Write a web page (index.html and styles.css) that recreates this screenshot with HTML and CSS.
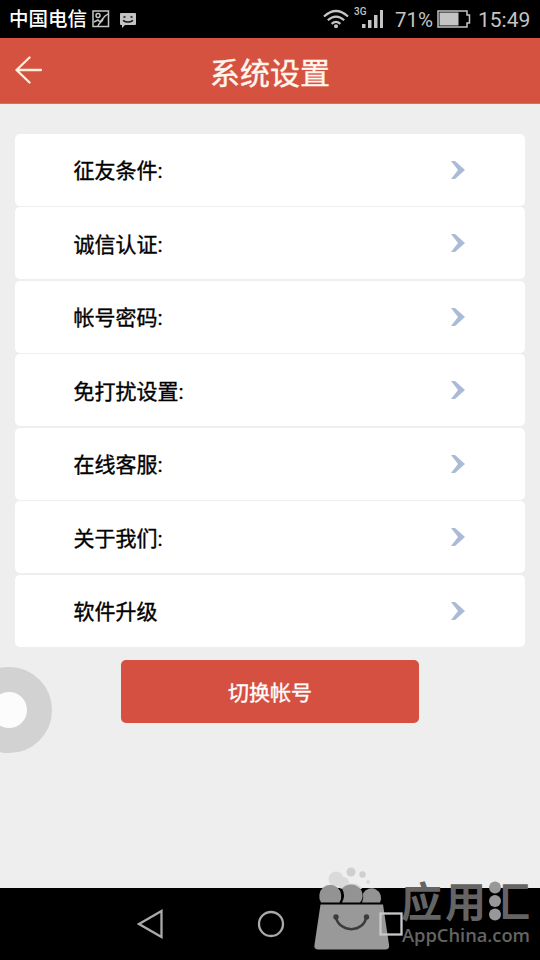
FILE: index.html
```html
<!DOCTYPE html>
<html lang="zh-CN">
<head>
<meta charset="utf-8">
<title>系统设置</title>
<link rel="stylesheet" href="styles.css">
</head>
<body>
<div class="screen">
  <div class="status">
    <span class="carrier">中国电信</span>
    <svg class="pic" width="18" height="18" viewBox="0 0 18 18" fill="none" stroke="#c4c4c4" stroke-width="1.5"><rect x="1" y="1" width="15.5" height="15.5"/><circle cx="6" cy="5.5" r="2"/><path d="M2 12l4-2 2 2 5-6 3-2M6 16c1-4 4-3 5-7"/></svg>
    <svg class="msg" width="18" height="17" viewBox="0 0 18 17"><path d="M2 1h14a1 1 0 0 1 1 1v10a1 1 0 0 1-1 1H6l-3 3v-3H2a1 1 0 0 1-1-1V2a1 1 0 0 1 1-1z" fill="#c4c4c4"/><path d="M4.500 5h2M11.500 5h2M4 8.300q5 3.500 10 0" stroke="#111" stroke-width="1.500" fill="none"/></svg>
    <span class="spacer"></span>
    <svg class="wifi" width="26" height="20" viewBox="0 0 26 20" fill="none" stroke="#c4c4c4" stroke-width="2.200"><path d="M1 7.500Q13-3.500 25 7.500M4.800 11.300Q13 3.900 21.200 11.300M8.600 14.800Q13 11.100 17.400 14.800"/><circle cx="13" cy="17.300" r="2" fill="#c4c4c4" stroke="none"/></svg>
    <span class="net">3G</span>
    <svg class="bars" width="23" height="20" viewBox="0 0 23 20" fill="#c4c4c4"><path d="M1 15h3.500v4H1zM7 11h3.500v8H7zM13 6h3.500v13H13zM19 1h3v18h-3z"/></svg>
    <span class="pct">71%</span>
    <svg class="batt" width="34" height="18" viewBox="0 0 34 18"><path d="M1 1h29v4h2.500v8H30v4H1z" fill="none" stroke="#c4c4c4" stroke-width="1.500"/><path d="M2.500 2.500h19v13h-19z" fill="#c4c4c4"/></svg>
    <span class="time">15:49</span>
  </div>
  <header class="header">
    <svg class="back" width="28" height="28" viewBox="0 0 28 28" fill="none" stroke="#fff0dc" stroke-width="2.300" stroke-linecap="round" stroke-linejoin="round"><path d="M14.500 1.500L1.500 14l13 12.500M1.500 14H26"/></svg>
    <h1 class="title">系统设置</h1>
  </header>
  <main class="content">
    <ul class="list">
      <li class="row"><span>征友条件:</span><svg class="chev" viewBox="0 0 16 20"><path d="M1 1h4l10 9-10 9H1l7-9z"/></svg></li>
      <li class="row"><span>诚信认证:</span><svg class="chev" viewBox="0 0 16 20"><path d="M1 1h4l10 9-10 9H1l7-9z"/></svg></li>
      <li class="row"><span>帐号密码:</span><svg class="chev" viewBox="0 0 16 20"><path d="M1 1h4l10 9-10 9H1l7-9z"/></svg></li>
      <li class="row"><span>免打扰设置:</span><svg class="chev" viewBox="0 0 16 20"><path d="M1 1h4l10 9-10 9H1l7-9z"/></svg></li>
      <li class="row"><span>在线客服:</span><svg class="chev" viewBox="0 0 16 20"><path d="M1 1h4l10 9-10 9H1l7-9z"/></svg></li>
      <li class="row"><span>关于我们:</span><svg class="chev" viewBox="0 0 16 20"><path d="M1 1h4l10 9-10 9H1l7-9z"/></svg></li>
      <li class="row"><span>软件升级</span><svg class="chev" viewBox="0 0 16 20"><path d="M1 1h4l10 9-10 9H1l7-9z"/></svg></li>
    </ul>
    <button class="switch">切换帐号</button>
  </main>
  <nav class="nav">
    <svg width="28" height="30" viewBox="0 0 28 30"><path d="M2 15L24.500 2v26z"/></svg>
    <svg width="28" height="28" viewBox="0 0 28 28"><circle cx="14" cy="14" r="12"/></svg>
    <svg class="recent" width="24" height="24" viewBox="0 0 24 24"><rect x="1.500" y="1.500" width="21" height="21"/></svg>
  </nav>
  <div class="float"></div>
  <div class="mark">
    <svg class="bag" width="80" height="86" viewBox="0 0 80 86">
      <g fill="#dadada"><circle cx="23" cy="13" r="7.500"/><circle cx="30" cy="17" r="6"/><circle cx="38" cy="6" r="4.500" fill="#cfcfcf"/><circle cx="49.500" cy="8.500" r="3.200" fill="#cfcfcf"/><circle cx="55" cy="16" r="2"/><path d="M30 23a10 8 0 0 1 19 0z"/></g>
      <g fill="#939393"><path d="M8 36.500a11 11.500 0 1 1 18.500 0z"/><path d="M29 36.500q4-7 0-14a11 10.500 0 0 1 18 14z"/><path d="M49 36.500q2-4 1-9a9 9 0 0 1 17 9z"/></g>
      <path d="M7.500 38.500h62.500l6 40q1 5-4 5H5.500q-5 0-4-5z" fill="#999"/>
      <path d="M22.500 50c3 17.500 29 17.500 31 0" fill="none" stroke="#3c3c3c" stroke-width="2.500"/>
      <circle cx="23" cy="51" r="2.700" fill="#3c3c3c"/><circle cx="53.500" cy="51" r="2.700" fill="#3c3c3c"/>
    </svg>
    <div class="brand">
      <div class="name"><span>应</span><span>用</span><span class="hui">汇</span>
        <svg class="dots" width="14" height="40" viewBox="0 0 14 40"><circle cx="7" cy="6.500" r="6"/><circle cx="7" cy="20" r="6"/><circle cx="7" cy="33.500" r="6"/></svg>
      </div>
      <div class="site">AppChina.com</div>
    </div>
  </div>
</div>
</body>
</html>
```
FILE: styles.css
```css
* { box-sizing: border-box; }
body { margin: 0; font-family: Roboto, "Noto Sans CJK SC", sans-serif; }
.screen { position: relative; width: 540px; height: 960px; background: #eee; overflow: hidden; display: flex; flex-direction: column; }
.status { height: 38px; flex: none; background: #000; color: #c4c4c4; display: flex; align-items: center; padding: 0 9px; white-space: nowrap; }
.carrier { font-size: 19.5px; line-height: 36px; color: #fff; font-family: "Noto Sans CJK SC", sans-serif; font-weight: 500; margin-top: -2px; }
.pic { margin-left: 5px; }
.msg { margin: 2px 0 0 9px; }
.spacer { flex: 1; }
.net { font-size: 10px; font-weight: 500; margin: -16px 0 0 5px; width: 13px; }
.bars { margin-left: -6px; }
.pct { font-size: 20.5px; margin: 2px 0 0 11px; width: 39px; }
.batt { margin-left: 3px; }
.time { font-size: 21px; margin: 2px 0 0 7px; width: 53px; }
.header { height: 66px; flex: none; background: #d55241; border-bottom: 1px solid #dc6c60; display: flex; align-items: center; padding: 0 15px; }
.back { margin-top: -2px; }
.title { flex: 1; margin: 0 28px 0 0; text-align: center; color: #fff6ed; font: 400 30px/44px "Noto Sans CJK SC", sans-serif; -webkit-text-stroke: 0.4px #fff6ed; }
.content { flex: 1; padding: 29.5px 15px 0; display: flex; flex-direction: column; align-items: center; }
.list { list-style: none; margin: 0; padding: 0; width: 510px; display: flex; flex-direction: column; gap: 1.5px; }
.row { height: 72px; background: #fff; border-radius: 5px; display: flex; align-items: center; justify-content: space-between; padding: 0 59px 0 58.5px; font: 400 21px/32px Roboto, "Noto Sans CJK SC", sans-serif; color: #000; -webkit-text-stroke: 0.35px #000; }
.row span { margin-top: 3px; }
.chev { width: 16px; height: 20px; fill: #a9bbd6; -webkit-text-stroke: 0; }
.switch { margin-top: 13px; width: 298px; height: 63px; border: 0; border-radius: 5px; background: #d55040; color: #fff; padding: 0; font: 400 21px/32px "Noto Sans CJK SC", sans-serif; -webkit-text-stroke: 0.35px #fff; }
.nav { height: 72px; flex: none; background: #000; display: flex; align-items: center; padding-left: 137px; gap: 92px; }
.nav svg { fill: none; stroke: #aaa; stroke-width: 2.3; }
.float { position: absolute; left: -34px; top: 667px; width: 86px; height: 86px; border-radius: 50%; border: 25px solid #d2d2d2; background: #fcfcfc; }
.mark { position: absolute; left: 313px; top: 866px; display: flex; }
.nav .recent { position: relative; z-index: 2; margin-left: 2px; stroke: #c8c8c8; }
.brand { margin-left: 8px; padding-top: 13px; color: #646464; }
.name { position: relative; display: flex; gap: 3px; height: 43px; font: 700 41px/41px "Noto Sans CJK SC", sans-serif; }
.name span { width: 41px; }
.hui { clip-path: inset(0 0 0 13px); }
.dots { position: absolute; left: 87px; top: 2px; fill: #989898; }
.site { font: 600 18.3px/24px "Open Sans", sans-serif; margin: 1px 0 0 1px; white-space: nowrap; }
```
